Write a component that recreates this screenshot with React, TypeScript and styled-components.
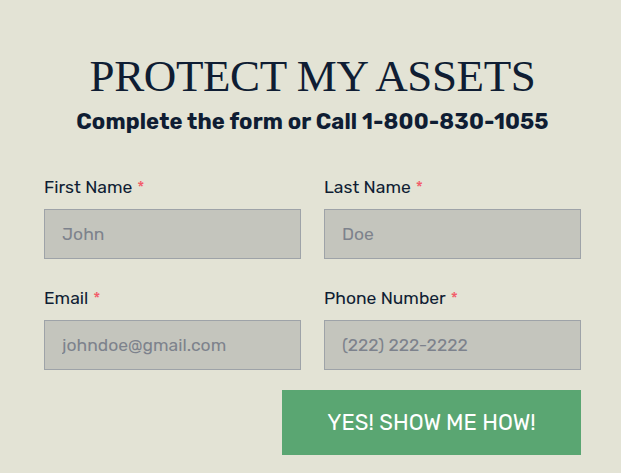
import styled, { createGlobalStyle } from 'styled-components'

const GlobalStyle = createGlobalStyle`
  html, body {
    margin: 0;
    padding: 0;
    background: #e3e3d5;
  }
  * { box-sizing: border-box; }
`

export const Page = styled.div`
  width: 621px;
  height: 473px;
  overflow: hidden;
  background: #e3e3d5;
  padding: 48px 40px 0 44px;
  font-family: "Rubik", "Inter", "Noto Sans", sans-serif;
  color: #0f1d33;
`

export const Title = styled.h1`
  margin: 0;
  text-align: center;
  font-family: "Liberation Serif", "DejaVu Serif", serif;
  font-weight: 400;
  font-size: 45px;
  line-height: 56px;
  letter-spacing: -0.4px;
  color: #0f1d33;
`

export const Subtitle = styled.h2`
  margin: 3px 0 0;
  text-align: center;
  font-weight: 700;
  font-size: 22px;
  line-height: 30px;
  letter-spacing: 0.1px;
  color: #0f1d33;
`

export const Form = styled.form`
  margin-top: 40px;
  display: grid;
  grid-template-columns: 1fr 1fr;
  column-gap: 23px;
  row-gap: 29px;
`

export const Field = styled.label`
  display: flex;
  flex-direction: column;
  gap: 12px;
`

export const Label = styled.span`
  display: block;
  height: 20px;
  font-size: 17.5px;
  line-height: 20px;
  color: #0f1d33;
  span {
    color: #f25d6a;
    font-size: 16px;
    line-height: 1;
    margin-left: 5px;
  }
`

export const Input = styled.input`
  height: 50px;
  width: 100%;
  padding: 0 17px;
  background: #c4c5bd;
  border: 1px solid #9ea3a8;
  font-family: inherit;
  font-size: 17.5px;
  color: #0f1d33;
  outline: none;
  &::placeholder {
    color: #7d828c;
  }
`

export const Actions = styled.div`
  grid-column: 1 / -1;
  display: flex;
  justify-content: flex-end;
  margin-top: -9px;
`

export const Button = styled.button`
  width: 299px;
  height: 65px;
  border: none;
  background: #5aa672;
  color: #ffffff;
  font-family: inherit;
  font-size: 22px;
  text-transform: uppercase;
  cursor: pointer;
`

export default function App() {
  return (
    <>
      <GlobalStyle />
      <Page>
        <Title>PROTECT MY ASSETS</Title>
        <Subtitle>Complete the form or Call 1-800-830-1055</Subtitle>
        <Form onSubmit={e => e.preventDefault()}>
          <Field>
            <Label>First Name<span>*</span></Label>
            <Input type="text" placeholder="John" />
          </Field>
          <Field>
            <Label>Last Name<span>*</span></Label>
            <Input type="text" placeholder="Doe" />
          </Field>
          <Field>
            <Label>Email<span>*</span></Label>
            <Input type="email" placeholder="johndoe@gmail.com" />
          </Field>
          <Field>
            <Label>Phone Number<span>*</span></Label>
            <Input type="tel" placeholder="(222) 222-2222" />
          </Field>
          <Actions>
            <Button type="submit">Yes! Show me how!</Button>
          </Actions>
        </Form>
      </Page>
    </>
  )
}
